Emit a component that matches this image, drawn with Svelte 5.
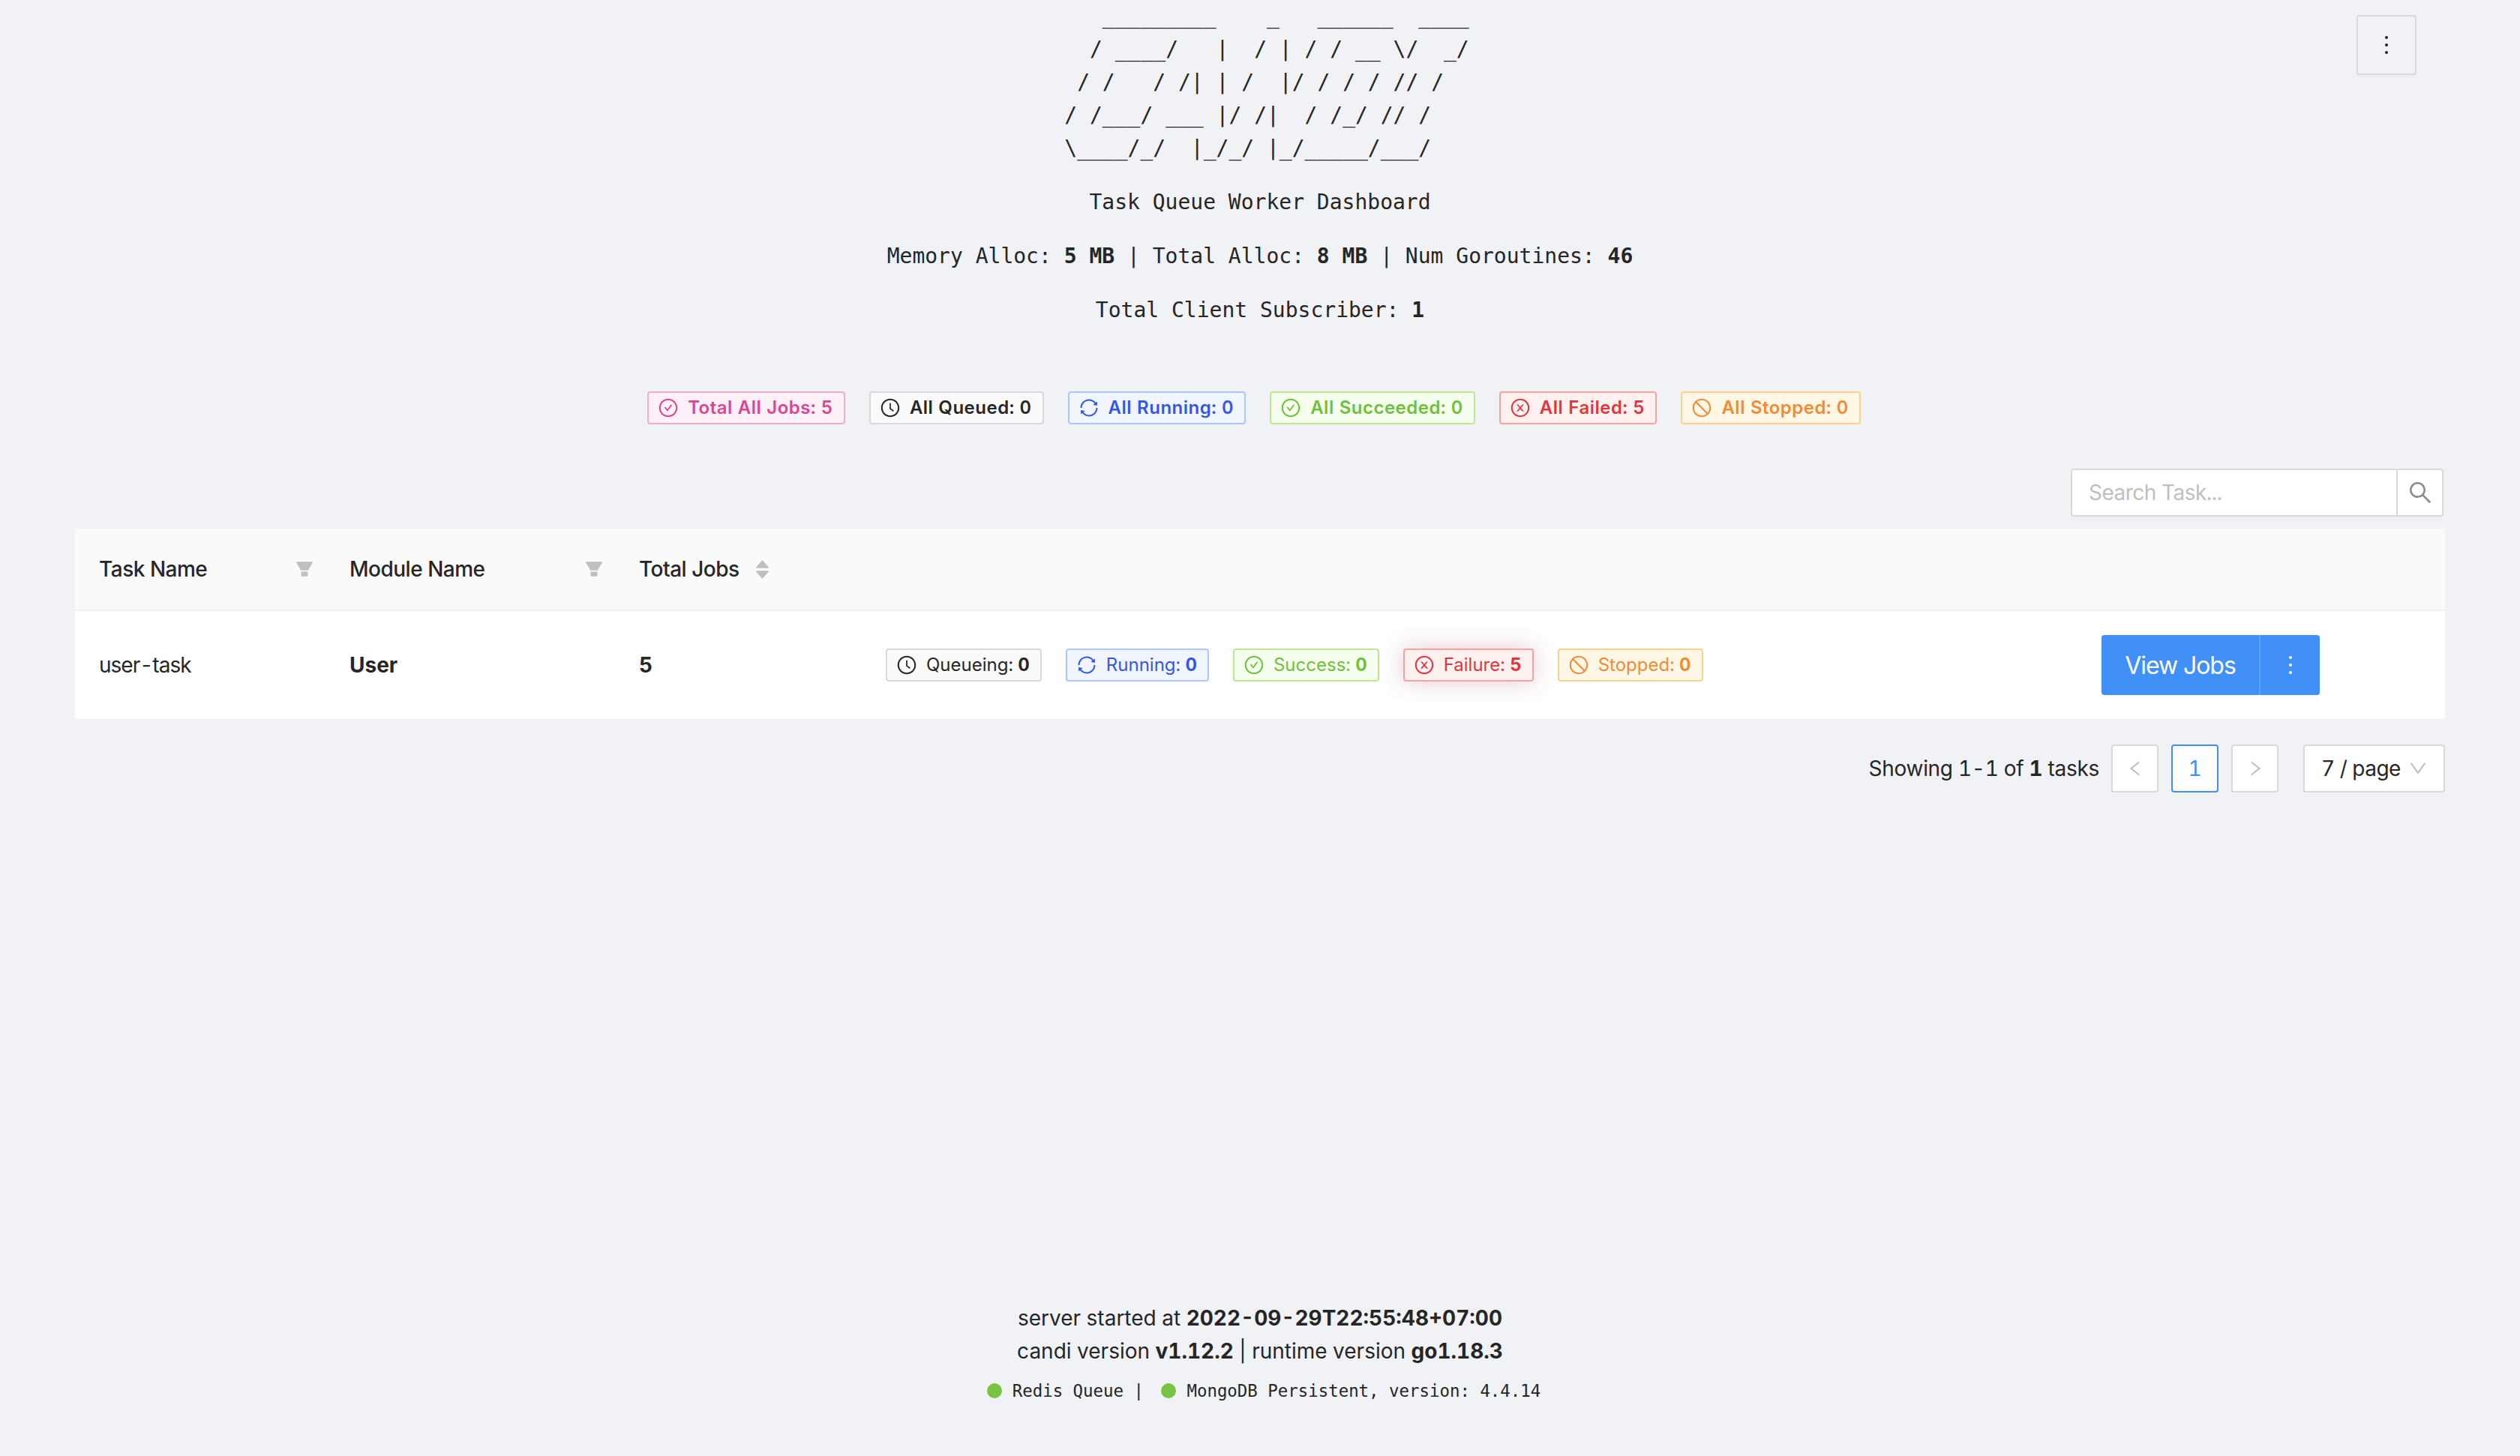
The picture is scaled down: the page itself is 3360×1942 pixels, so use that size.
<script>
  const circle = 'M512 64C264.6 64 64 264.6 64 512s200.6 448 448 448 448-200.6 448-448S759.4 64 512 64zm0 820c-205.4 0-372-166.6-372-372s166.6-372 372-372 372 166.6 372 372-166.6 372-372 372z';
  const icons = {
    check: circle + 'M699 353h-46.9c-10.2 0-19.9 4.9-25.9 13.3L469 584.3l-71.2-98.8c-6-8.3-15.6-13.3-25.9-13.3H325c-6.5 0-10.3 7.4-6.5 12.7l124.6 172.8a31.8 31.8 0 0051.7 0l210.6-292c3.9-5.3.1-12.7-6.4-12.7z',
    clock: circle + 'M686.7 638.6L544.1 535.5V288c0-4.4-3.6-8-8-8H488c-4.4 0-8 3.6-8 8v275.4c0 2.6 1.2 5 3.3 6.5l165.4 120.6c3.6 2.6 8.6 1.8 11.2-1.7l28.6-39c2.6-3.7 1.8-8.7-1.8-11.2z',
    sync: 'M168 504.2c1-43.7 10-86.1 26.9-126 17.3-41 42.1-77.7 73.7-109.4S337 212.3 378 195c42.4-17.9 87.4-27 133.9-27s91.5 9.1 133.8 27A341.5 341.5 0 01755 268.8c9.9 9.9 19.2 20.4 27.8 31.4l-60.2 47a8 8 0 003 14.1l175.7 43c5 1.2 9.9-2.6 9.9-7.7l.8-180.9c0-6.7-7.7-10.5-12.9-6.3l-56.4 44.1C765.8 155.1 646.2 92 511.8 92 282.7 92 96.3 275.6 92 503.8a8 8 0 008 8.2h60c4.4 0 7.9-3.5 8-7.8zm756 7.8h-60c-4.4 0-7.9 3.5-8 7.8-1 43.7-10 86.1-26.9 126-17.3 41-42.1 77.8-73.7 109.4A342.45 342.45 0 01512.1 856a342.24 342.24 0 01-243.2-100.8c-9.9-9.9-19.2-20.4-27.8-31.4l60.2-47a8 8 0 00-3-14.1l-175.7-43c-5-1.2-9.9 2.6-9.9 7.7l-.7 181c0 6.7 7.7 10.5 12.9 6.3l56.4-44.1C258.2 868.9 377.8 932 512.2 932c229.2 0 415.5-183.7 419.8-411.8a8 8 0 00-8-8.2z',
    close: circle + 'M685.4 354.8c0-4.4-3.6-8-8-8l-66 .3L512 465.6l-99.3-118.4-66.1-.3c-4.4 0-8 3.5-8 8 0 1.9.7 3.7 1.9 5.2l130.1 155L340.5 670a8.32 8.32 0 00-1.9 5.2c0 4.4 3.6 8 8 8l66.1-.3L512 564.4l99.3 118.4 66 .3c4.4 0 8-3.5 8-8 0-1.9-.7-3.7-1.9-5.2L553.5 515l130.1-155c1.2-1.4 1.8-3.3 1.8-5.2z',
    stop: 'M512 64C264.6 64 64 264.6 64 512s200.6 448 448 448 448-200.6 448-448S759.4 64 512 64zm0 820c-205.4 0-372-166.6-372-372 0-89 31.3-170.8 83.5-234.8l523.3 523.3C682.8 852.7 601 884 512 884zm288.5-137.2L277.2 223.5C341.2 171.3 423 140 512 140c205.4 0 372 166.6 372 372 0 89-31.3 170.8-83.5 234.8z',
    filter: 'M349 838c0 17.7 14.2 32 31.8 32h262.4c17.6 0 31.8-14.3 31.8-32V642H349v196zm531.1-684H143.9c-24.5 0-39.8 26.7-27.5 48l221.3 376h348.8l221.3-376c12.1-21.3-3.2-48-27.7-48z',
    up: 'M858.9 689L530.5 308.2c-9.4-10.9-27.5-10.9-37 0L165.1 689c-12.2 14.2-1.2 35 18.5 35h656.8c19.7 0 30.7-20.8 18.5-35z',
    down: 'M840.4 300H183.6c-19.7 0-30.7 20.8-18.5 35l328.4 380.8c9.4 10.9 27.5 10.9 37 0L858.9 335c12.2-14.2 1.2-35-18.5-35z',
    search: 'M909.6 854.5L649.9 594.8C690.2 542.7 712 479 712 412c0-80.2-31.3-155.4-87.9-212.1-56.6-56.7-132-87.9-212.1-87.9s-155.5 31.3-212.1 87.9C143.2 256.5 112 331.8 112 412c0 80.1 31.3 155.5 87.9 212.1C256.5 680.8 331.8 712 412 712c67 0 130.6-21.8 182.7-62l259.7 259.6a8.2 8.2 0 0011.6 0l43.6-43.5a8.2 8.2 0 000-11.6zM570.4 570.4C528 612.7 471.8 636 412 636s-116-23.3-158.4-65.6C211.3 528 188 471.8 188 412s23.3-116.1 65.6-158.4C296 211.3 352.2 188 412 188s116.1 23.2 158.4 65.6S636 352.2 636 412s-23.3 116.1-65.6 158.4z',
    left: 'M724 218.3V141c0-6.7-7.7-10.4-12.9-6.3L260.3 486.8a31.86 31.86 0 000 50.3l450.8 352.1c5.3 4.1 12.9.4 12.9-6.3v-77.3c0-4.9-2.3-9.6-6.1-12.6l-360-281 360-281.1c3.8-3 6.1-7.7 6.1-12.6z',
    right: 'M765.7 486.8L314.9 134.7A7.97 7.97 0 00302 141v77.3c0 4.9 2.3 9.6 6.1 12.6l360 281.1-360 281.1c-3.9 3-6.1 7.7-6.1 12.6V883c0 6.7 7.7 10.4 12.9 6.3l450.8-352.1a31.96 31.96 0 000-50.3z',
    chevron: 'M884 256h-75c-5.1 0-9.9 2.5-12.9 6.6L512 654.2 227.9 262.6c-3-4.1-7.8-6.6-12.9-6.6h-75c-6.5 0-10.3 7.4-6.5 12.7l352.6 486.1c12.8 17.6 39 17.6 51.7 0l352.6-486.1c3.9-5.3.1-12.7-6.4-12.7z'
  };
  const logo = [
    '   _________    _   ______  ____',
    '  / ____/   |  / | / / __ \\/  _/',
    ' / /   / /| | /  |/ / / / // /  ',
    '/ /___/ ___ |/ /|  / /_/ // /   ',
    '\\____/_/  |_/_/ |_/_____/___/   '
  ].join('\n');
  const summary = [
    { tone: 'pink', icon: 'check', label: 'Total All Jobs: 5' },
    { tone: 'dark', icon: 'clock', label: 'All Queued: 0' },
    { tone: 'blue', icon: 'sync', label: 'All Running: 0' },
    { tone: 'green', icon: 'check', label: 'All Succeeded: 0' },
    { tone: 'red', icon: 'close', label: 'All Failed: 5' },
    { tone: 'orange', icon: 'stop', label: 'All Stopped: 0' }
  ];
  const statuses = [
    { tone: 'dark', icon: 'clock', label: 'Queueing:', n: 0 },
    { tone: 'blue', icon: 'sync', label: 'Running:', n: 0 },
    { tone: 'green', icon: 'check', label: 'Success:', n: 0 },
    { tone: 'red', icon: 'close', label: 'Failure:', n: 5, glow: true },
    { tone: 'orange', icon: 'stop', label: 'Stopped:', n: 0 }
  ];
</script>

{#snippet icon(name, cls = '')}
  <svg class={cls} viewBox="0 0 1024 1024" fill="currentColor" aria-hidden="true"><path d={icons[name]} /></svg>
{/snippet}

{#snippet dots()}
  <span class="dots"><i></i><i></i><i></i></span>
{/snippet}

<div class="page">
  <button class="corner">{@render dots()}</button>

  <header class="head">
    <pre class="logo">{logo}</pre>
    <p>Task Queue Worker Dashboard</p>
    <p>Memory Alloc: <b>5 MB</b> | Total Alloc: <b>8 MB</b> | Num Goroutines: <b>46</b></p>
    <p>Total Client Subscriber: <b>1</b></p>
  </header>

  <div class="summary">
    {#each summary as t}
      <span class="tag strong {t.tone}">{@render icon(t.icon, 'tag-ic')}{t.label}</span>
    {/each}
  </div>

  <div class="search">
    <div class="search-input">Search Task...</div>
    <div class="search-btn">{@render icon('search', 'search-ic')}</div>
  </div>

  <table>
    <colgroup>
      <col class="c1" /><col class="c2" /><col class="c3" /><col class="c4" /><col class="c5" />
    </colgroup>
    <thead>
      <tr>
        <th><div class="th-in"><span>Task Name</span>{@render icon('filter', 'filter')}</div></th>
        <th><div class="th-in"><span>Module Name</span>{@render icon('filter', 'filter')}</div></th>
        <th>
          <div class="th-sort">
            <span>Total Jobs</span>
            <span class="sorter">{@render icon('up')}{@render icon('down')}</span>
          </div>
        </th>
        <th></th>
        <th></th>
      </tr>
    </thead>
    <tbody>
      <tr>
        <td class="name">user-task</td>
        <td><b>User</b></td>
        <td><b>5</b></td>
        <td>
          <div class="statuses">
            {#each statuses as t}
              <span class="tag {t.tone}" class:glow={t.glow}>{@render icon(t.icon, 'tag-ic')}{t.label}&nbsp;<b>{t.n}</b></span>
            {/each}
          </div>
        </td>
        <td>
          <div class="actions">
            <button class="primary view">View Jobs</button>
            <button class="primary more">{@render dots()}</button>
          </div>
        </td>
      </tr>
    </tbody>
  </table>

  <nav class="pager">
    <span class="total">Showing 1-1 of <b>1</b> tasks</span>
    <span class="pg">{@render icon('left', 'pg-ic')}</span>
    <span class="pg active">1</span>
    <span class="pg">{@render icon('right', 'pg-ic')}</span>
    <span class="size">7 / page {@render icon('chevron', 'size-ic')}</span>
  </nav>

  <footer class="foot">
    <div>server started at <b>2022-09-29T22:55:48+07:00</b></div>
    <div>candi version <b>v1.12.2</b> | runtime version <b>go1.18.3</b></div>
    <div class="deps"><i class="dot"></i>Redis Queue | <i class="dot second"></i>MongoDB Persistent, version: 4.4.14</div>
  </footer>
</div>

<style>
  :global(body) { margin: 0; background: #f0f2f5; }
  .page {
    min-height: 1942px;
    box-sizing: border-box;
    display: flex;
    flex-direction: column;
    position: relative;
    padding: 0 100px;
    font-family: Inter, "Liberation Sans", sans-serif;
    font-size: 28px;
    line-height: 44px;
    color: #262626;
    font-feature-settings: "tnum";
    font-optical-sizing: none;
  }
  b { font-weight: 700; }
  button { font-family: inherit; font-feature-settings: inherit; font-optical-sizing: none; cursor: pointer; }

  .corner {
    position: absolute;
    top: 20px;
    right: 138px;
    width: 80px;
    height: 80px;
    padding: 0;
    background: transparent;
    border: 2px solid #d9d9d9;
    border-radius: 4px;
    color: #262626;
    box-shadow: 0 4px 0 rgba(0, 0, 0, 0.015);
    display: flex;
    align-items: center;
    justify-content: center;
  }
  .dots { display: flex; flex-direction: column; gap: 6px; }
  .dots i { display: block; width: 4px; height: 4px; border-radius: 50%; background: currentColor; }

  .head {
    text-align: center;
    font-family: "DejaVu Sans Mono", monospace;
    color: #262626;
  }
  .logo {
    margin: 0 0 28px;
    font: inherit;
    line-height: 44px;
    width: fit-content;
    margin-left: auto;
    margin-right: auto;
    padding-left: 18px;
    text-align: left;
  }
  .head p { margin: 0 0 28px; }

  .summary {
    display: flex;
    justify-content: center;
    margin-top: 58px;
    gap: 32px;
    padding-right: 16px;
  }
  .tag {
    display: inline-flex;
    align-items: center;
    box-sizing: border-box;
    height: 44px;
    padding: 0 14px;
    border: 2px solid;
    border-radius: 4px;
    font-size: 24px;
    line-height: 40px;
    white-space: nowrap;
  }
  .tag.strong { font-weight: 600; letter-spacing: 0.5px; }
  .tag :global(.tag-ic) { width: 28px; height: 28px; margin: 0 12px 0 -2px; flex: none; }
  .dark { color: #262626; background: #fafafa; border-color: #d9d9d9; }
  .pink { color: #dd4492; background: #fdf0f6; border-color: #f6abcc; }
  .blue { color: #3558e3; background: #f0f5ff; border-color: #adc6ff; }
  .green { color: #6fc13d; background: #f6ffed; border-color: #bde88f; }
  .red { color: #e0363f; background: #fff1f0; border-color: #f6a39f; }
  .orange { color: #ee8c37; background: #fff7e6; border-color: #fbd28b; }
  .glow { box-shadow: 0 0 30px rgba(150, 50, 90, 0.26); }

  .search {
    display: flex;
    align-self: flex-end;
    margin: 59px 2px 16px 0;
    height: 64px;
    box-shadow: 0 4px 0 rgba(0, 0, 0, 0.015);
  }
  .search-input {
    box-sizing: border-box;
    width: 436px;
    height: 64px;
    padding: 0 22px;
    background: #fff;
    border: 2px solid #d9d9d9;
    border-radius: 4px 0 0 4px;
    color: #bfbfbf;
    font-size: 28px;
    line-height: 60px;
    letter-spacing: -0.5px;
  }
  .search-btn {
    box-sizing: border-box;
    width: 63px;
    height: 64px;
    margin-left: -2px;
    background: #fff;
    border: 2px solid #d9d9d9;
    border-radius: 0 4px 4px 0;
    color: #8c8c8c;
    display: flex;
    align-items: center;
    justify-content: center;
  }
  :global(.search-ic) { width: 36px; height: 36px; }

  table {
    width: 3160px;
    table-layout: fixed;
    border-collapse: separate;
    border-spacing: 0;
    background: #fff;
    border-radius: 4px;
  }
  .c1 { width: 334px; }
  .c2 { width: 386px; }
  .c3 { width: 329px; }
  .c4 { width: 1621px; }
  .c5 { width: 490px; }
  th {
    height: 108px;
    padding: 0 32px;
    background: #fafafa;
    border-bottom: 2px solid #f0f0f0;
    font-weight: 450;
    text-align: left;
    font-size: 28px;
    letter-spacing: -0.5px;
  }
  td {
    height: 144px;
    padding: 0 32px;
    font-size: 28px;
  }
  td.name { letter-spacing: -1px; }
  .th-in { display: flex; align-items: center; justify-content: space-between; margin-right: -16px; }
  .th-sort { display: flex; align-items: center; gap: 16px; }
  th :global(.filter) { width: 28px; height: 28px; color: #bfbfbf; margin-right: -2px; }
  .sorter { display: flex; flex-direction: column; color: #bfbfbf; gap: 3px; margin-left: 2px; }
  .sorter :global(svg) { width: 25px; height: 25px; margin: -7px 0; display: block; }
  .statuses { display: flex; gap: 32px; }
  .actions { display: flex; }
  .primary {
    height: 80px;
    background: #4090f7;
    color: #fff;
    border: 0;
    font-size: 32px;
    padding: 0;
    box-shadow: 0 4px 0 rgba(0, 0, 0, 0.02);
  }
  .view { width: 212px; border-radius: 4px 0 0 4px; border-right: 2px solid #5ea3f9; letter-spacing: -1px; }
  .more { width: 79px; border-radius: 0 4px 4px 0; display: flex; align-items: center; justify-content: center; }

  .pager {
    display: flex;
    align-items: center;
    justify-content: flex-end;
    margin-top: 34px;
    height: 64px;
  }
  .total { margin-right: 16px; letter-spacing: -0.3px; }
  .pg {
    box-sizing: border-box;
    width: 63px;
    height: 64px;
    margin-right: 17px;
    background: #fff;
    border: 2px solid #d9d9d9;
    border-radius: 4px;
    display: flex;
    align-items: center;
    justify-content: center;
    color: #bfbfbf;
  }
  .pg.active { border-color: #4090f7; color: #4090f7; font-weight: 400; }
  :global(.pg-ic) { width: 26px; height: 26px; }
  .size {
    box-sizing: border-box;
    width: 189px;
    height: 64px;
    margin-left: 16px;
    padding: 0 20px 0 22px;
    background: #fff;
    border: 2px solid #d9d9d9;
    border-radius: 4px;
    display: flex;
    align-items: center;
    justify-content: space-between;
    white-space: nowrap;
    letter-spacing: -0.5px;
  }
  :global(.size-ic) { width: 28px; height: 28px; color: #bfbfbf; }

  .foot {
    margin-top: auto;
    padding-bottom: 69px;
    text-align: center;
  }
  .deps {
    font-family: "DejaVu Sans Mono", monospace;
    font-size: 22.4px;
    line-height: 36px;
    margin-top: 13px;
    padding-left: 10px;
  }
  .dot {
    display: inline-block;
    width: 20px;
    height: 20px;
    border-radius: 50%;
    background: #76c442;
    margin-right: 14px;
    vertical-align: -2px;
  }
  .dot.second { margin-left: 10px; }
</style>
